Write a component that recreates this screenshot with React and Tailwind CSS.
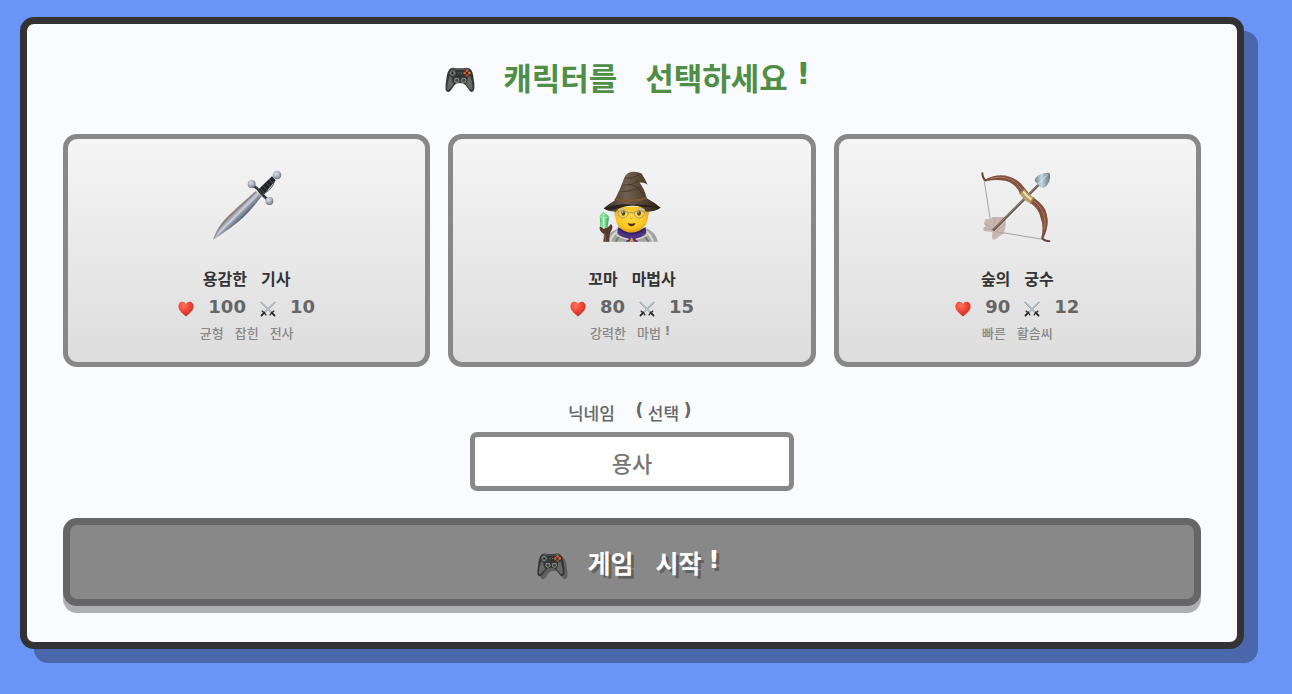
import { useState } from "react";

const SwordIcon = ({ className }) => (
    <svg viewBox="62 45 216 216" className={className} aria-hidden="true">
        <defs>
            <linearGradient id="blade" x1="125" y1="165" x2="152" y2="192" gradientUnits="userSpaceOnUse">
                <stop offset="0" stopColor="#77706f" />
                <stop offset="0.35" stopColor="#a89f9f" />
                <stop offset="0.5" stopColor="#c3c9d1" />
                <stop offset="0.7" stopColor="#8f9eac" />
                <stop offset="1" stopColor="#59636d" />
            </linearGradient>
            <radialGradient id="pommel" cx="0.4" cy="0.35" r="0.7">
                <stop offset="0" stopColor="#d9e0ea" />
                <stop offset="0.6" stopColor="#a0a7b2" />
                <stop offset="1" stopColor="#60656e" />
            </radialGradient>
        </defs>
        <path d="M68 254 Q76 224 104 193 Q118 177 196 108 L214 124 Q186 160 160 186 Q126 218 68 254Z" fill="url(#blade)" />
        <path d="M70 251 Q84 220 112 190 L198 110" stroke="#6d6869" strokeWidth="2" fill="none" />
        <path d="M84 236 Q142 178 203 119" stroke="#ccd4de" strokeWidth="3" fill="none" />
        <path d="M203 104 L245 64 L256 76 L222 118Z" fill="#202327" />
        <path d="M217 91 L231 106 M226 82 L240 96 M236 73 L248 86 M209 99 L222 113" stroke="#696c70" strokeWidth="2" />
        <path d="M253 78 Q246 102 224 114" stroke="#55585d" strokeWidth="3" fill="none" />
        <path d="M187 92 Q201 97 209 111 Q219 122 232 134" stroke="#34373b" strokeWidth="8" fill="none" strokeLinecap="round" />
        <circle cx="184" cy="87" r="12" fill="url(#pommel)" />
        <circle cx="237" cy="138" r="12" fill="url(#pommel)" />
        <circle cx="260" cy="60" r="13" fill="url(#pommel)" />
    </svg>
);

const MageIcon = ({ className }) => (
    <svg viewBox="78 45 216 216" className={className} aria-hidden="true">
        <defs>
            <radialGradient id="skin" cx="0.48" cy="0.42" r="0.6">
                <stop offset="0" stopColor="#ffdc3e" />
                <stop offset="0.7" stopColor="#fbc51f" />
                <stop offset="1" stopColor="#df8e13" />
            </radialGradient>
            <linearGradient id="hat" x1="0" x2="1">
                <stop offset="0" stopColor="#382d22" />
                <stop offset="0.4" stopColor="#706050" />
                <stop offset="0.7" stopColor="#51422f" />
                <stop offset="1" stopColor="#292116" />
            </linearGradient>
            <linearGradient id="crystal" x1="0" x2="1">
                <stop offset="0" stopColor="#4bc36d" />
                <stop offset="0.45" stopColor="#a2efac" />
                <stop offset="1" stopColor="#279755" />
            </linearGradient>
        </defs>
        <path d="M104 260 Q112 233 146 220 L225 219 Q256 228 264 260Z" fill="#a2a29e" />
        <path d="M120 260 Q124 240 145 228 M249 260 Q242 238 225 227" stroke="#d8d8d2" strokeWidth="7" fill="none" />
        <path d="M137 260 L149 240 M236 260 L221 240" stroke="#777774" strokeWidth="5" />
        <path d="M144 216 Q186 246 227 216 L229 233 Q216 247 197 252 L205 260 L167 260 L174 252 Q154 247 142 233Z" fill="#4b3180" />
        <path d="M147 221 Q185 251 225 221" stroke="#30235a" strokeWidth="5" fill="none" />
        <path d="M139 240 Q156 250 176 253 M232 240 Q216 250 197 253" stroke="#e4dfd2" strokeWidth="4" fill="none" />
        <path d="M137 158 Q126 172 139 190 L148 164Z M230 154 Q244 165 232 186 L222 166Z" fill="#b9c4c8" />
        <path d="M135 155 Q133 207 153 221 Q185 245 218 220 Q238 204 236 155Z" fill="url(#skin)" />
        <path d="M101 160 Q113 149 133 137 Q149 107 160 76 Q164 60 176 53 Q195 47 214 55 Q224 70 233 89 Q222 81 209 83 Q224 102 230 130 Q254 143 272 158 Q256 170 228 170 Q216 151 186 151 Q155 150 137 170 Q112 170 101 160Z" fill="url(#hat)" />
        <path d="M166 70 Q187 72 210 58 M160 91 Q186 92 207 77 M154 109 Q182 112 213 94 M177 88 Q202 90 219 117" stroke="#3b3023" strokeWidth="3" fill="none" opacity="0.7" />
        <path d="M136 129 Q184 143 229 126 L231 132 Q183 149 133 135Z" fill="#7d5734" />
        <path d="M102 160 Q153 143 187 149 Q232 146 271 159 Q243 154 221 157 Q186 145 147 159 Q118 169 102 160Z" fill="#28221a" />
        <path d="M146 166 Q156 157 167 166 M202 165 Q212 157 224 166" stroke="#bbc1bf" strokeWidth="4" fill="none" />
        <ellipse cx="160" cy="174" rx="6" ry="8" fill="#31200f" />
        <ellipse cx="207" cy="174" rx="6" ry="8" fill="#31200f" />
        <circle cx="158" cy="171" r="2" fill="#fff" />
        <circle cx="205" cy="171" r="2" fill="#fff" />
        <g fill="#fff5b0" fillOpacity="0.2" stroke="#a49b75" strokeWidth="3">
            <path d="M143 170 Q158 164 174 171 Q176 188 160 189 Q145 188 143 170Z" />
            <path d="M193 171 Q209 164 224 170 Q223 188 208 189 Q192 188 193 171Z" />
            <path d="M174 175 Q183 169 193 175" fill="none" />
        </g>
        <path d="M180 188 Q184 192 189 188" stroke="#d79a17" strokeWidth="3" fill="none" />
        <path d="M173 204 Q184 208 196 204 Q194 214 184 214 Q175 213 173 204Z" fill="#542310" />
        <path d="M100 260 L102 238 Q84 227 90 214 Q97 221 106 219 Q117 218 122 207 Q131 213 125 224 Q116 239 118 260Z" fill="#553b30" />
        <path d="M103 235 L107 260" stroke="#89614c" strokeWidth="4" />
        <path d="M100 169 L117 185 L113 216 L101 222 L91 211 L89 184Z" fill="url(#crystal)" />
        <path d="M89 184 L101 190 L117 185 M101 190 L101 221" stroke="#d2ffd4" strokeWidth="2" fill="none" />
        <path d="M185 246 L192 260 L178 260Z" fill="#f39a35" />
    </svg>
);

const BowIcon = ({ className }) => (
    <svg viewBox="64 45 216 216" className={className} aria-hidden="true">
        <defs>
            <linearGradient id="tip" x1="0" x2="1">
                <stop offset="0" stopColor="#77868f" />
                <stop offset="0.45" stopColor="#c2d7e2" />
                <stop offset="1" stopColor="#68757d" />
            </linearGradient>
        </defs>
        <path d="M73 73 L94 208 M100 228 L249 253" stroke="#a5a5a5" strokeWidth="3" />
        <path d="M77 193 L94 191 L98 186 L131 186 L139 190 L137 220 L132 235 L104 255 L97 250 L98 231 L73 228 L70 220 L78 213 L73 206Z" fill="#c9b6b0" />
        <path d="M106 188 L102 218 M130 190 L108 221 M137 207 L112 226 M132 235 L106 229 M75 207 L96 218 M74 221 L98 224" stroke="#ad9993" strokeWidth="2" />
        <path d="M100 226 L238 88" stroke="#66564d" strokeWidth="8" />
        <path d="M103 221 L237 87" stroke="#a3958a" strokeWidth="3" />
        <path d="M225 77 Q226 66 239 59 Q254 52 269 54 Q274 65 268 80 Q262 96 250 98 Q241 99 236 91Z" fill="url(#tip)" />
        <path d="M234 88 L264 59" stroke="#d3e3ec" strokeWidth="3" />
        <path d="M68 55 Q69 70 78 76 Q102 64 129 67 Q169 71 191 112 L218 135 Q252 154 260 190 Q263 222 248 249 Q252 257 269 259" fill="none" stroke="#6c4234" strokeWidth="6" strokeLinecap="round" />
        <path d="M79 73 Q113 54 150 65 Q177 73 197 101 L214 124 Q243 140 257 164 Q274 206 249 248 L245 248 Q253 213 243 190 Q238 162 213 145 L182 117 Q168 84 137 77 Q104 72 80 79Z" fill="#80513f" />
        <path d="M93 70 Q139 59 167 82 Q177 91 187 106 M222 138 Q246 154 254 184 Q258 203 254 222" fill="none" stroke="#b07a65" strokeWidth="3" />
        <path d="M179 113 L193 101 L201 111 L211 119 L224 128 L214 147 L199 138 L186 125Z" fill="#b9a167" />
        <path d="M190 109 Q199 123 215 133" stroke="#f2e4b6" strokeWidth="6" fill="none" />
        <path d="M180 116 L194 102 M213 146 L223 128" stroke="#927343" strokeWidth="4" />
    </svg>
);

const GamepadIcon = ({ className }) => (
    <svg viewBox="44 47 90 90" className={className} aria-hidden="true">
        <path d="M59 58 Q67 53 77 57 L100 57 Q111 53 120 59 Q128 66 130 90 Q134 111 131 122 Q127 131 119 126 L106 108 Q100 101 89 101 Q77 101 72 108 L60 125 Q52 132 46 123 Q44 110 48 90 Q50 66 59 58Z" fill="#343633" />
        <path d="M58 79 Q50 99 50 118 Q51 124 57 120 L71 103 Q63 97 65 85Z M119 79 Q128 99 127 118 Q125 124 119 120 L106 103 Q114 94 112 85Z" fill="#666863" />
        <path d="M64 59 Q69 56 76 60 L102 60 Q109 56 116 60" fill="none" stroke="#737470" strokeWidth="2" />
        <circle cx="67" cy="71" r="10" fill="#555c5e" />
        <path d="M67 64 V78 M60 71 H74" stroke="#9daaad" strokeWidth="4" />
        <path d="M67 66 V76 M62 71 H72" stroke="#202425" strokeWidth="3" />
        <circle cx="79" cy="93" r="8" fill="#8d9291" />
        <circle cx="79" cy="93" r="5" fill="#3f4444" />
        <circle cx="100" cy="93" r="8" fill="#8d9291" />
        <circle cx="100" cy="93" r="5" fill="#3f4444" />
        <circle cx="110" cy="64" r="4" fill="#ee5d26" />
        <circle cx="117" cy="71" r="4" fill="#f06a37" />
        <circle cx="110" cy="78" r="4" fill="#b6492c" />
        <circle cx="103" cy="71" r="4" fill="#dc5d36" />
        <path d="M84 71 H87 M92 71 H95" stroke="#858984" strokeWidth="3" />
    </svg>
);

const HeartIcon = ({ className }) => (
    <svg viewBox="0 0 16 16" className={className} aria-hidden="true">
        <defs>
            <radialGradient id="heart" cx="0.35" cy="0.25" r="0.8">
                <stop offset="0" stopColor="#ff7262" />
                <stop offset="0.5" stopColor="#ee4734" />
                <stop offset="1" stopColor="#bd2c22" />
            </radialGradient>
        </defs>
        <path d="M8 3.2 C6.8 .2 3.2 .1 1.4 2.2 C-.3 4.4 .3 7.6 2.2 10 C3.8 12.2 6.2 13.9 8 15.4 C9.8 13.9 12.2 12.2 13.8 10 C15.7 7.6 16.3 4.4 14.6 2.2 C12.8 .1 9.2 .2 8 3.2Z" fill="url(#heart)" />
    </svg>
);

const SwordsIcon = ({ className }) => (
    <svg viewBox="0 0 16 16" className={className} aria-hidden="true">
        <path d="M.8 1 L12.3 12.2 M15.2 1 L3.7 12.2" stroke="#71808e" strokeWidth="1.3" />
        <path d="M.8 1 L12 12 M15.2 1 L4 12" stroke="#d5e4f1" strokeWidth=".7" />
        <path d="M1.7 10 Q3.9 10.6 6.3 14.3 M14.3 10 Q12.1 10.6 9.7 14.3" fill="none" stroke="#353535" strokeWidth="1.3" />
        <path d="M4.3 11.7 L1.5 14.5 M11.7 11.7 L14.5 14.5" stroke="#272727" strokeWidth="1.8" strokeLinecap="round" />
    </svg>
);

const characters = [
    { id: "knight", name: "용감한 기사", Icon: SwordIcon, hp: 100, attack: 10, description: "균형 잡힌 전사" },
    { id: "mage", name: "꼬마 마법사", Icon: MageIcon, hp: 80, attack: 15, description: "강력한 마법!" },
    { id: "archer", name: "숲의 궁수", Icon: BowIcon, hp: 90, attack: 12, description: "빠른 활솜씨" },
];

// Punctuation is heavy, sits high and takes a full cell, like in an arcade font
const Mark = ({ children }) => (
    <span className="inline-block w-[1em] text-center align-text-top font-['DejaVu_Sans',sans-serif] leading-tight font-bold">
        {children}
    </span>
);

// Splits on spaces so the parent's gap sets the distance between words
const Words = ({ text }) =>
    text.split(" ").map((word) => (
        <span key={word}>
            {word.split(/([!()])/).map((part, i) => (/[!()]/.test(part) ? <Mark key={i}>{part}</Mark> : part))}
        </span>
    ));

const CharacterCard = ({ character, selected, onSelect }) => {
    const { name, Icon, hp, attack, description } = character;

    return (
        <button
            type="button"
            aria-pressed={selected}
            onClick={onSelect}
            className="flex flex-col items-center rounded-[14px] border-5 border-[#888888] bg-linear-to-b from-[#f5f5f5] to-[#dddddd] px-4 pt-[31px] pb-[19px] cursor-pointer"
        >
            <Icon className="size-18" />
            <span className="mt-[26px] flex gap-[14px] text-base leading-5 font-bold text-[#333333]">
                <Words text={name} />
            </span>
            <span className="mt-[9px] flex items-center gap-[14px] font-['DejaVu_Sans',sans-serif] text-[18px] leading-5 font-bold text-[#666666]">
                <HeartIcon className="mt-1 size-4" />
                <span>{hp}</span>
                <SwordsIcon className="mt-1 size-4" />
                <span>{attack}</span>
            </span>
            <span className="mt-1.5 flex gap-[11px] text-[13px] leading-5 font-medium text-[#888888]">
                <Words text={description} />
            </span>
        </button>
    );
};

const App = () => {
    const [selected, setSelected] = useState(null);
    const [nickname, setNickname] = useState("");

    return (
        <div className="min-h-screen bg-[#6a94f5] pt-[17px] pr-12 pb-11 pl-5 font-['Noto_Sans_CJK_KR',sans-serif]">
            <main className="rounded-[14px] border-7 border-[#333333] bg-[#f9fbff] px-9 pt-[30px] pb-9 shadow-[14px_14px_0_rgba(0,0,0,0.3)]">
                {/* Title */}
                <h1 className="flex items-center justify-center gap-7 text-[31px] leading-[46px] font-bold text-[#4f8f45]">
                    <GamepadIcon className="mt-1.5 size-[30px]" />
                    <Words text="캐릭터를 선택하세요!" />
                </h1>

                {/* Characters */}
                <div className="mt-[34px] grid grid-cols-3 gap-[18px]">
                    {characters.map((character) => (
                        <CharacterCard
                            key={character.id}
                            character={character}
                            selected={selected === character.id}
                            onSelect={() => setSelected(character.id)}
                        />
                    ))}
                </div>

                {/* Nickname */}
                <div className="mt-8 flex flex-col items-center">
                    <label htmlFor="nickname" className="flex gap-4 text-[17px] leading-[27px] font-medium text-[#666666]">
                        <Words text="닉네임 (선택)" />
                    </label>
                    <input
                        id="nickname"
                        type="text"
                        value={nickname}
                        onChange={(e) => setNickname(e.target.value)}
                        placeholder="용사"
                        className="mt-1.5 h-[59px] w-full max-w-[324px] rounded-[7px] border-5 border-[#888888] bg-white px-4 text-center text-[22px] font-medium text-[#333333] placeholder:text-[#757575]"
                    />
                </div>

                {/* Start */}
                <button
                    type="submit"
                    className="mt-[27px] flex h-22 w-full items-center justify-center gap-[22px] rounded-[14px] border-7 border-[#666666] bg-[#888888] text-[25px] leading-10 font-bold text-white shadow-[0_7px_0_rgba(0,0,0,0.3)] text-shadow-[3px_3px_0_rgba(0,0,0,0.3)]"
                >
                    <GamepadIcon className="mt-1.5 size-7 drop-shadow-[3px_3px_0_rgba(0,0,0,0.3)]" />
                    <Words text="게임 시작!" />
                </button>
            </main>
        </div>
    );
};

export default App;
